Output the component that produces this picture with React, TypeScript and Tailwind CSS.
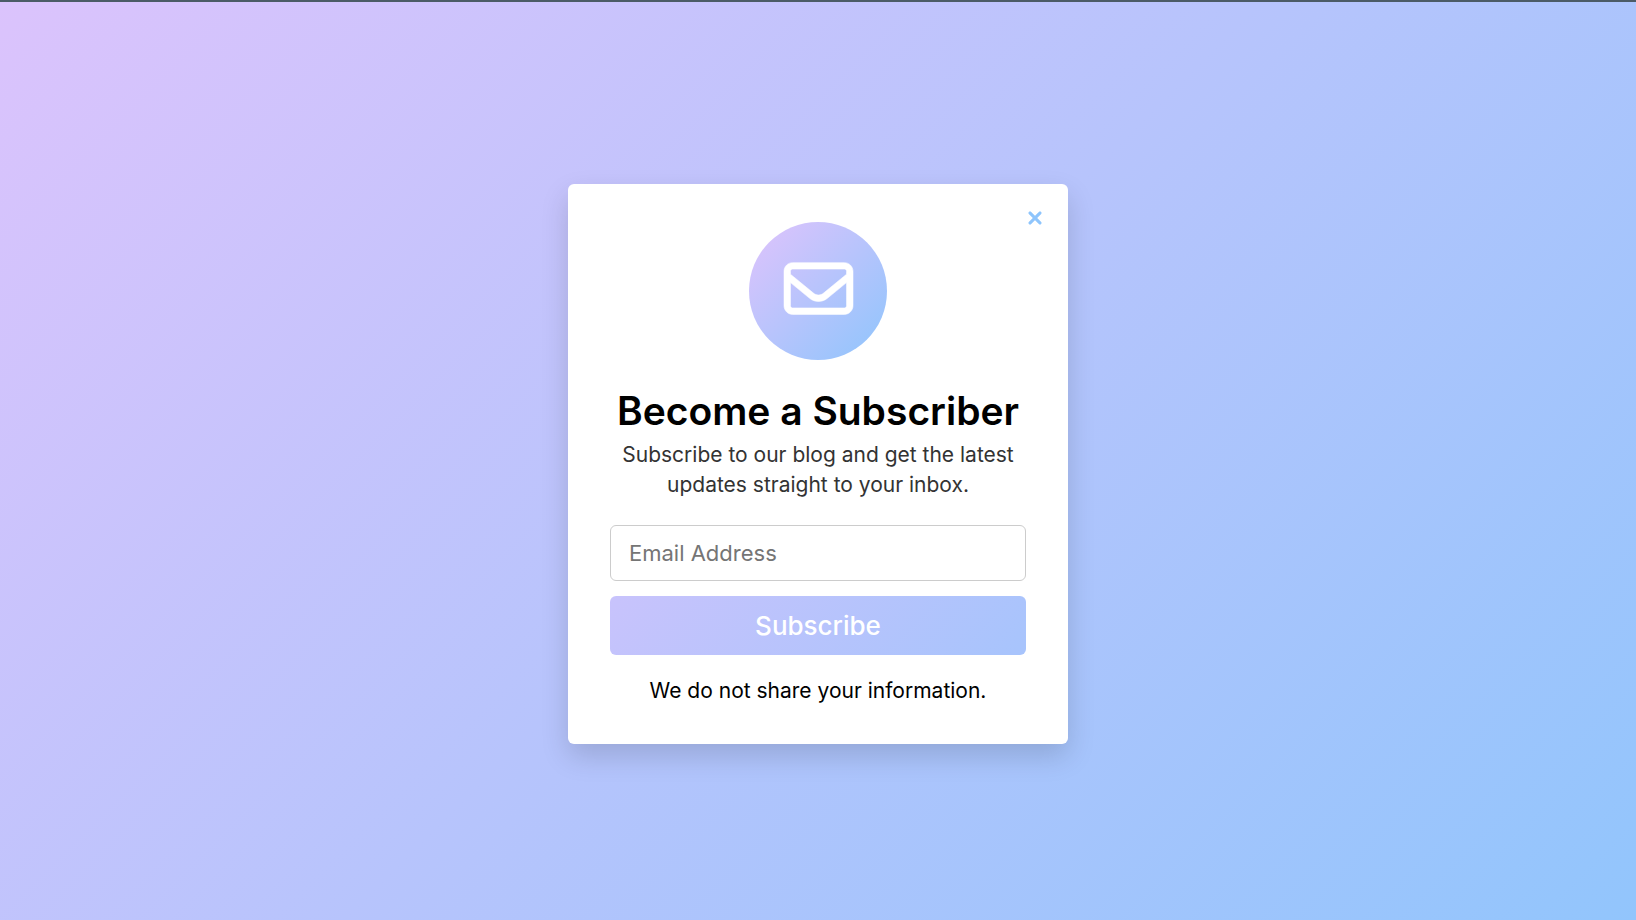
import { FaRegEnvelope, FaXmark } from "react-icons/fa6";

export default function App() {
  return (
    <main className="flex min-h-screen items-center justify-center border-t-2 border-[#4b5b66] bg-[linear-gradient(135deg,#dbc3fc_0%,#92c5fc_100%)] px-4 pt-1.5 font-['Inter',sans-serif]">
      <section className="relative w-full max-w-[500px] rounded-md bg-white px-[42px] py-[38px] text-center shadow-[0_12px_28px_rgba(0,0,0,0.15)]">
        <button
          type="button"
          aria-label="Close"
          className="absolute top-6 right-[23px] flex size-5 items-center justify-center text-[#8ec5fc]"
        >
          <FaXmark size={20} strokeWidth={18} className="shrink-0" />
        </button>
        <div className="mx-auto flex size-[138px] items-center justify-center rounded-full bg-[linear-gradient(135deg,#e0c3fc_0%,#8ec5fc_100%)] pb-1.5 text-white">
          <FaRegEnvelope size={69} strokeWidth={4} className="overflow-visible" />
        </div>
        <h1 className="mt-7 mb-1.5 text-[39px] leading-[46px] font-semibold text-black">
          Become a Subscriber
        </h1>
        <p className="text-[21px] leading-[30px] text-[#333]">
          Subscribe to our blog and get the latest updates straight to your inbox.
        </p>
        <form className="mt-[25px]" onSubmit={(e) => e.preventDefault()}>
          <input
            type="email"
            aria-label="Email Address"
            placeholder="Email Address"
            className="block h-14 w-full rounded-md border border-[#ccc] px-[18px] text-[22px] text-black placeholder:text-[#757575]"
          />
          <button
            type="submit"
            className="mt-[15px] block h-[59px] w-full rounded-md bg-[linear-gradient(135deg,#c8c3fc_0%,#a7c4fc_100%)] text-[26px] font-medium text-white"
          >
            Subscribe
          </button>
        </form>
        <p className="mt-[21px] text-[21px] leading-[30px] text-black">We do not share your information.</p>
      </section>
    </main>
  );
}
